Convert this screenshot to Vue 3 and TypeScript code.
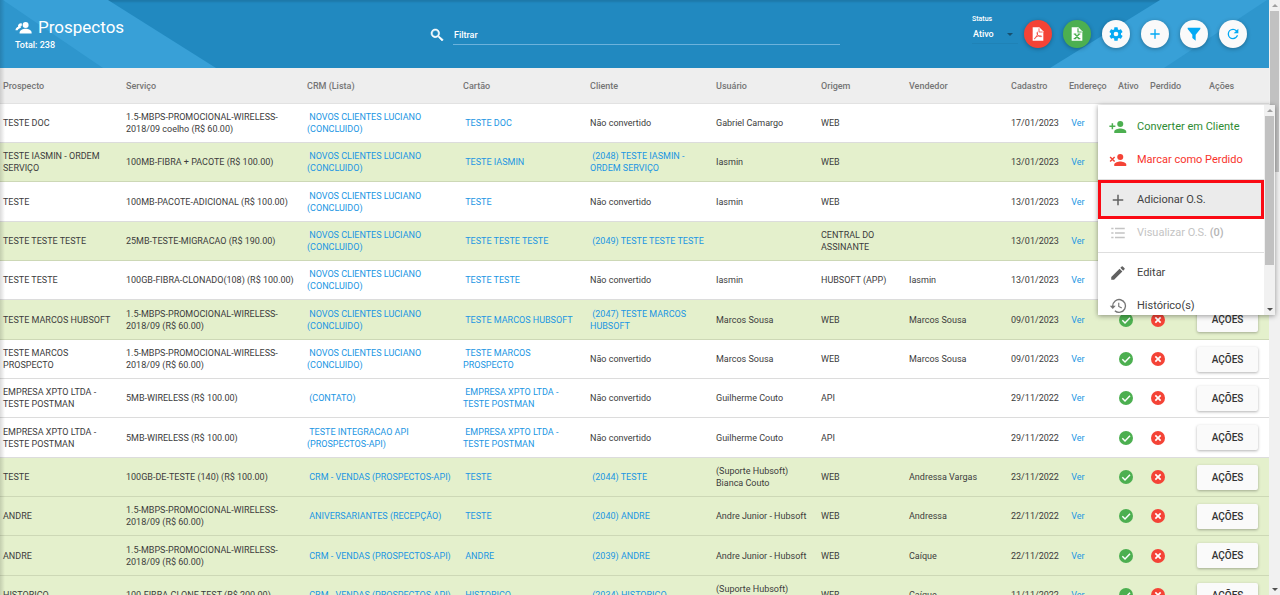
<script setup lang="ts">
import { ref } from 'vue'

interface Row {
  name: string
  service: string
  crm: string
  card: string
  client: string
  user: string
  origin: string
  seller: string
  date: string
}

const promo = '1.5-MBPS-PROMOCIONAL-WIRELESS-2018/09'
const novos = 'NOVOS CLIENTES LUCIANO (CONCLUIDO)'
const vendas = 'CRM - VENDAS (PROSPECTOS-API)'

function row(
  name: string, service: string, crm: string, card: string, client: string,
  user: string, origin: string, seller: string, date: string,
): Row {
  return { name, service, crm, card, client, user, origin, seller, date }
}

const rows: Row[] = [
  row('TESTE DOC', promo + ' coelho (R$ 60.00)', novos, 'TESTE DOC', '', 'Gabriel Camargo', 'WEB', '', '17/01/2023'),
  row('TESTE IASMIN - ORDEM SERVIÇO', '100MB-FIBRA + PACOTE (R$ 100.00)', novos, 'TESTE IASMIN', '(2048) TESTE IASMIN - ORDEM SERVIÇO', 'Iasmin', 'WEB', '', '13/01/2023'),
  row('TESTE', '100MB-PACOTE-ADICIONAL (R$ 100.00)', novos, 'TESTE', '', 'Iasmin', 'WEB', '', '13/01/2023'),
  row('TESTE TESTE TESTE', '25MB-TESTE-MIGRACAO (R$ 190.00)', novos, 'TESTE TESTE TESTE', '(2049) TESTE TESTE TESTE', '', 'CENTRAL DO ASSINANTE', '', '13/01/2023'),
  row('TESTE TESTE', '100GB-FIBRA-CLONADO(108) (R$ 100.00)', novos, 'TESTE TESTE', '', 'Iasmin', 'HUBSOFT (APP)', 'Iasmin', '13/01/2023'),
  row('TESTE MARCOS HUBSOFT', promo + ' (R$ 60.00)', novos, 'TESTE MARCOS HUBSOFT', '(2047) TESTE MARCOS HUBSOFT', 'Marcos Sousa', 'WEB', 'Marcos Sousa', '09/01/2023'),
  row('TESTE MARCOS PROSPECTO', promo + ' (R$ 60.00)', novos, 'TESTE MARCOS PROSPECTO', '', 'Marcos Sousa', 'WEB', 'Marcos Sousa', '09/01/2023'),
  row('EMPRESA XPTO LTDA - TESTE POSTMAN', '5MB-WIRELESS (R$ 100.00)', '(CONTATO)', 'EMPRESA XPTO LTDA - TESTE POSTMAN', '', 'Guilherme Couto', 'API', '', '29/11/2022'),
  row('EMPRESA XPTO LTDA - TESTE POSTMAN', '5MB-WIRELESS (R$ 100.00)', 'TESTE INTEGRACAO API (PROSPECTOS-API)', 'EMPRESA XPTO LTDA - TESTE POSTMAN', '', 'Guilherme Couto', 'API', '', '29/11/2022'),
  row('TESTE', '100GB-DE-TESTE (140) (R$ 100.00)', vendas, 'TESTE', '(2044) TESTE', '(Suporte Hubsoft)\nBianca Couto', 'WEB', 'Andressa Vargas', '23/11/2022'),
  row('ANDRE', promo + ' (R$ 60.00)', 'ANIVERSARIANTES (RECEPÇÃO)', 'TESTE', '(2040) ANDRE', 'Andre Junior - Hubsoft', 'WEB', 'Andressa', '22/11/2022'),
  row('ANDRE', promo + ' (R$ 60.00)', vendas, 'ANDRE', '(2039) ANDRE', 'Andre Junior - Hubsoft', 'WEB', 'Caíque', '22/11/2022'),
  row('HISTORICO', '100-FIBRA-CLONE TEST (R$ 200.00)', vendas, 'HISTORICO', '(2034) HISTORICO', '(Suporte Hubsoft)\nBianca Couto', 'WEB', 'Caíque', '11/11/2022'),
]

const headings = ['Prospecto', 'Serviço', 'CRM (Lista)', 'Cartão', 'Cliente', 'Usuário', 'Origem', 'Vendedor', 'Cadastro', 'Endereço', 'Ativo', 'Perdido', 'Ações']

const search = ref('')
const status = ref('Ativo')
</script>

<template>
  <div class="page">
    <main class="content">
      <header class="topbar">
        <svg class="band band-left" width="216" height="68" viewBox="0 0 216 68" aria-hidden="true">
          <path d="M0 0H108L216 68H0z" fill="#38a0d7" />
          <path d="M0 0H3L103 68H0z" fill="#2e96cd" />
        </svg>
        <svg class="band band-right" width="219" height="68" viewBox="0 0 219 68" aria-hidden="true">
          <path d="M0 68L110 0H219V68z" fill="#38a0d7" />
          <path d="M114 68L217 0H219V68z" fill="#2e96cd" />
        </svg>
        <div class="brand">
          <h1>
            <svg width="17" height="17" viewBox="0 0 24 24" fill="#fff" aria-hidden="true">
              <circle cx="15" cy="8.500" r="4.200" />
              <path d="M6.500 19.500c0-4 5-5.700 8.500-5.700s8.500 1.700 8.500 5.700v1h-17z" />
              <path d="M9.800 6.200A4 4 0 0 0 4.400 11C2.500 11.800.7 13.200.7 15.800h3c1-2 2.500-3 4.800-3.600L7.600 11c1.300-.3 1.900-1.200 2-2.500z" />
            </svg>
            Prospectos
          </h1>
          <p>Total: 238</p>
        </div>
        <div class="search">
          <svg width="16" height="16" viewBox="0 0 24 24" fill="#fff" aria-hidden="true">
            <path d="M15.500 14h-.8l-.3-.3A6.500 6.500 0 1 0 13.700 14.400l.3.300v.8l5.500 5.500 1.900-1.900zM9.500 14a4.500 4.500 0 1 1 0-9 4.500 4.500 0 0 1 0 9z" stroke="#fff" stroke-width=".8" />
          </svg>
          <input v-model="search" type="text" placeholder="Filtrar" aria-label="Filtrar" />
        </div>
        <div class="tools">
          <div class="status">
            <label for="status">Status</label>
            <div class="select-wrap">
              <select id="status" v-model="status">
                <option>Ativo</option>
                <option>Inativo</option>
              </select>
              <span class="caret"></span>
            </div>
          </div>
          <button class="round red" type="button" aria-label="Exportar PDF">
            <svg width="16" height="16" viewBox="0 0 24 24">
              <path d="M4 2h10l6 6v14H4z" fill="#fff" />
              <path d="M13.500 3.500V9H19M7 19c2-1 4.500-6 4.500-9 0-1.500-1.500-1-1 1 .7 3 3.500 5.500 6.500 5 1.500-.5 0-1.500-2-1.300-3 .2-6.500 1.300-8 3.300-.8 1 0 1.500 1 .5" fill="none" stroke="#f44336" stroke-width="1.200" />
            </svg>
          </button>
          <button class="round green" type="button" aria-label="Exportar Excel">
            <svg width="16" height="16" viewBox="0 0 24 24">
              <path d="M4 2h10l6 6v14H4z" fill="#fff" />
              <path d="M13.500 3.500V9H19M8.500 12l7 7M15.500 12l-7 7M7 12h4M13 12h4M7 19h4M13 19h4" fill="none" stroke="#4caf50" stroke-width="1.800" />
            </svg>
          </button>
          <button class="round" type="button" aria-label="Configurações">
            <svg width="16" height="16" viewBox="0 0 24 24">
              <path fill="#03a9f4" d="M12 15.500A3.500 3.500 0 0 1 8.500 12 3.500 3.500 0 0 1 12 8.500a3.500 3.500 0 0 1 3.500 3.500 3.500 3.500 0 0 1-3.500 3.500m7.430-2.530c.04-.32.070-.64.070-.97s-.03-.66-.07-1l2.110-1.630c.19-.15.240-.42.120-.64l-2-3.460c-.12-.22-.39-.31-.61-.22l-2.490 1c-.52-.39-1.060-.73-1.690-.98l-.37-2.650A.506.506 0 0 0 14 2h-4c-.25 0-.46.180-.5.420l-.37 2.650c-.63.250-1.170.590-1.690.980l-2.490-1c-.22-.09-.49 0-.61.220l-2 3.460c-.13.220-.07.490.120.640L4.570 11c-.04.340-.07.670-.07 1s.03.650.070.970l-2.110 1.660c-.19.150-.25.420-.12.640l2 3.460c.120.220.390.300.610.220l2.490-1.010c.520.400 1.060.740 1.690.990l.370 2.650c.04.240.250.420.500.420h4c.250 0 .460-.18.500-.42l.370-2.650c.630-.26 1.170-.59 1.690-.99l2.490 1.010c.220.080.490 0 .610-.22l2-3.460c.120-.22.070-.49-.12-.64z" />
            </svg>
          </button>
          <button class="round" type="button" aria-label="Adicionar">
            <svg width="16" height="16" viewBox="0 0 24 24"><path d="M12 5v14M5 12h14" stroke="#03a9f4" stroke-width="2" /></svg>
          </button>
          <button class="round" type="button" aria-label="Filtros">
            <svg width="16" height="16" viewBox="0 0 24 24"><path d="M2.500 2.500h19v2l-7 8.500v9L9.500 18v-5l-7-8.500z" fill="#03a9f4" /></svg>
          </button>
          <button class="round" type="button" aria-label="Atualizar">
            <svg width="16" height="16" viewBox="0 0 24 24">
              <path d="M17.650 6.350A7.958 7.958 0 0 0 12 4a8 8 0 0 0-8 8 8 8 0 0 0 8 8c3.730 0 6.840-2.550 7.730-6h-2.080A5.990 5.990 0 0 1 12 18a6 6 0 0 1-6-6 6 6 0 0 1 6-6c1.660 0 3.140.690 4.220 1.780L13 11h7V4z" fill="#03a9f4" />
            </svg>
          </button>
        </div>
      </header>

      <table>
        <colgroup>
          <col v-for="(h, i) in headings" :key="h" :class="'c' + i" />
        </colgroup>
        <thead>
          <tr>
            <th v-for="h in headings" :key="h" scope="col">{{ h }}</th>
          </tr>
        </thead>
        <tbody>
          <tr v-for="(r, i) in rows" :key="i" :class="{ converted: r.client }">
            <td>{{ r.name }}</td>
            <td>{{ r.service }}</td>
            <td>&nbsp;<a href="#">{{ r.crm }}</a></td>
            <td>&nbsp;<a href="#">{{ r.card }}</a></td>
            <td v-if="r.client">&nbsp;<a href="#">{{ r.client }}</a></td>
            <td v-else>Não convertido</td>
            <td class="user">{{ r.user }}</td>
            <td>{{ r.origin }}</td>
            <td>{{ r.seller }}</td>
            <td class="nowrap">{{ r.date }}</td>
            <td>&nbsp;<a href="#">Ver</a></td>
            <td class="mark">
              <svg width="16" height="16" viewBox="0 0 24 24" role="img" aria-label="Sim">
                <circle cx="12" cy="12" r="10.500" fill="#4caf50" />
                <path d="M6.500 12.500l4 4 7.500-8" fill="none" stroke="#fff" stroke-width="2.200" />
              </svg>
            </td>
            <td class="mark">
              <svg width="16" height="16" viewBox="0 0 24 24" role="img" aria-label="Não">
                <circle cx="12" cy="12" r="10.500" fill="#f44336" />
                <path d="M8 8l8 8M16 8l-8 8" stroke="#fff" stroke-width="2.500" />
              </svg>
            </td>
            <td class="act"><button type="button">AÇÕES</button></td>
          </tr>
        </tbody>
      </table>
      <div class="edge"></div>
    </main>

    <div class="scroll page-scroll" aria-hidden="true">
      <span class="arrow up"></span>
      <span class="thumb"></span>
      <span class="arrow down"></span>
    </div>

    <div class="menu">
      <div class="items" role="menu">
        <button class="ok" type="button" role="menuitem">
          <svg width="18" height="18" viewBox="0 0 24 24" fill="#4caf50" aria-hidden="true">
            <circle cx="15" cy="8" r="4" />
            <path d="M7 20v-2c0-2.700 5.300-4 8-4s8 1.300 8 4v2zM3.500 7h2v3h3v2h-3v3h-2v-3h-3v-2h3z" />
          </svg>
          Converter em Cliente
        </button>
        <button class="bad" type="button" role="menuitem">
          <svg width="18" height="18" viewBox="0 0 24 24" fill="#f44336" aria-hidden="true">
            <circle cx="15" cy="8" r="4" />
            <path d="M7 20v-2c0-2.700 5.300-4 8-4s8 1.300 8 4v2z" />
            <path d="M1.500 8l6 6M7.500 8l-6 6" stroke="#f44336" stroke-width="2" />
          </svg>
          Marcar como Perdido
        </button>
        <hr />
        <button class="current" type="button" role="menuitem">
          <svg width="18" height="18" viewBox="0 0 24 24" aria-hidden="true"><path d="M12 5v14M5 12h14" stroke="#616161" stroke-width="2" /></svg>
          Adicionar O.S.
        </button>
        <button type="button" role="menuitem" disabled>
          <svg width="18" height="18" viewBox="0 0 24 24" aria-hidden="true">
            <path d="M3 6h3M3 12h3M3 18h3M8 6h13M8 12h13M8 18h13" stroke="#c4c4c4" stroke-width="2" />
          </svg>
          <span>Visualizar O.S. <b>(0)</b></span>
        </button>
        <hr />
        <button type="button" role="menuitem">
          <svg width="18" height="18" viewBox="0 0 24 24" fill="#616161" aria-hidden="true">
            <path d="M3 17.250V21h3.750L17.810 9.940l-3.750-3.750zM20.710 7.040a1 1 0 0 0 0-1.410l-2.340-2.340a1 1 0 0 0-1.410 0l-1.830 1.830 3.750 3.750z" />
          </svg>
          Editar
        </button>
        <button type="button" role="menuitem">
          <svg width="18" height="18" viewBox="0 0 24 24" aria-hidden="true">
            <path d="M5 12a8.500 8.500 0 1 1 2.800 6.200" fill="none" stroke="#757575" stroke-width="1.800" />
            <path d="M1 11.500h8l-4 4.500z" fill="#757575" />
            <path d="M13 7.500v5l4 2.300" fill="none" stroke="#757575" stroke-width="1.500" />
          </svg>
          Histórico(s)
        </button>
      </div>
      <div class="scroll" aria-hidden="true">
        <span class="arrow up"></span>
        <span class="thumb"></span>
        <span class="arrow down"></span>
      </div>
    </div>
  </div>
</template>

<style>
html, body { overflow: hidden; }
</style>

<style scoped>
.page, .page * { box-sizing: border-box; }
.page {
  position: relative;
  display: grid;
  grid-template-columns: minmax(0, 1fr) 11px;
  height: 100vh;
  overflow: hidden;
  background: #fff;
  color: #3c3c3c;
  font-family: Roboto, "Liberation Sans", sans-serif;
  font-size: 9px;
  line-height: 12px;
}
button, input, select { font-family: inherit; }
.content { position: relative; overflow: hidden; }

.topbar {
  position: relative;
  display: grid;
  grid-template-columns: 429px minmax(0, 1fr) 429px;
  grid-template-rows: 68px;
  background: #2189c0;
  color: #fff;
  box-shadow: inset 0 2px 2px rgba(0, 0, 0, .12);
}
.band { position: absolute; top: 0; }
.band-left { left: 0; }
.band-right { right: 0; }
.brand { position: relative; padding: 16px 0 0 15px; }
h1 {
  display: flex;
  align-items: center;
  gap: 6px;
  margin: 0;
  font-size: 17px;
  line-height: 22px;
  font-weight: 400;
}
.brand p { margin: 1px 0 0; font-weight: 500; }
.search { display: flex; align-items: center; gap: 8px; padding-top: 2px; }
.search input {
  flex: 1;
  min-width: 0;
  height: 19px;
  padding: 0 1px;
  border: 0;
  border-bottom: 1px solid #6cb2dc;
  background: none;
  color: #fff;
  font-size: 9px;
  font-weight: 500;
  outline: 0;
}
.search input::placeholder { color: #fff; opacity: 1; }
.tools {
  position: relative;
  display: flex;
  align-items: center;
  justify-content: flex-end;
  gap: 11px;
  padding-right: 22px;
}
.status { align-self: flex-start; width: 46px; margin-right: -5px; padding-top: 13px; }
.status label { display: block; font-size: 7px; font-weight: 500; }
.select-wrap { position: relative; border-bottom: 1px solid rgba(0, 0, 0, .05); }
.status select {
  display: block;
  width: 100%;
  height: 18px;
  padding: 0 0 0 1px;
  border: 0;
  background: none;
  color: #fff;
  font-size: 9px;
  font-weight: 500;
  appearance: none;
}
.status option { color: #333; }
.caret {
  position: absolute;
  right: 5px;
  top: 8px;
  border: 3px solid transparent;
  border-top-color: #17506f;
  pointer-events: none;
}
.round {
  display: grid;
  place-items: center;
  width: 28px;
  height: 28px;
  padding: 0;
  border: 0;
  border-radius: 50%;
  background: #fafafa;
  box-shadow: 0 1px 4px rgba(0, 0, 0, .3);
}
.red { background: #f44336; }
.green { background: #4caf50; }

table { width: 100%; table-layout: fixed; border-collapse: separate; border-spacing: 0; }
.c0 { width: 123px; }
.c1 { width: 181px; }
.c2 { width: 156px; }
.c3 { width: 127px; }
.c4 { width: 126px; }
.c5 { width: 105px; }
.c6 { width: 88px; }
.c7 { width: 102px; }
.c8 { width: 58px; }
.c9 { width: 49px; }
.c10 { width: 32px; }
.c11 { width: 40px; }
.c12 { width: 82px; }
th {
  height: 36px;
  padding: 0 0 0 3px;
  border-bottom: 1px solid #e2e2e2;
  background: #eee;
  color: #757575;
  font-weight: 500;
  text-align: left;
  white-space: nowrap;
}
th:last-child { padding-left: 22px; }
td { height: 39px; padding: 0 9px 0 3px; border-bottom: 1px solid #dcdcdc; }
tr:nth-child(3n) td { height: 40px; }
.converted td { background: #e4f0cc; border-bottom-color: #cdd8b6; }
.user { white-space: pre-line; }
.nowrap { white-space: nowrap; padding-right: 0; }
td a { color: #2196e3; text-decoration: none; }
.mark { padding-right: 0; }
.mark svg { display: block; }
.act { padding: 0 11px 0 10px; }
.act button {
  display: block;
  width: 100%;
  height: 25px;
  padding: 0;
  border: 0;
  border-radius: 2px;
  background: #fafafa;
  color: #333;
  font-size: 10px;
  font-weight: 500;
  box-shadow: 0 1px 3px rgba(0, 0, 0, .3);
}
.edge {
  position: absolute;
  inset: 0 auto 0 0;
  width: 5px;
  background: linear-gradient(90deg, rgba(0, 0, 0, .14), transparent);
  pointer-events: none;
}

.scroll {
  display: flex;
  flex-direction: column;
  align-items: center;
  width: 11px;
  background: #f1f1f1;
}
.arrow { display: grid; place-items: center; height: 11px; }
.arrow::before { content: ""; border: 3px solid transparent; }
.up::before { border-top: 0; border-bottom-color: #a0a0a0; }
.down::before { border-bottom: 0; border-top-color: #505050; }
.down { margin-top: auto; }
.thumb { width: 9px; height: 71%; background: #c1c1c1; }
.page-scroll .thumb { height: 27%; }

.menu {
  position: absolute;
  top: 105px;
  right: 5px;
  display: grid;
  grid-template-columns: minmax(0, 1fr) 11px;
  width: 177px;
  height: 210px;
  background: #fff;
  box-shadow: 0 1px 5px rgba(0, 0, 0, .4);
}
.items { height: 210px; padding-top: 5px; overflow: hidden; }
.items button {
  display: flex;
  align-items: center;
  gap: 10px;
  width: 100%;
  height: 33px;
  padding: 0 11px;
  border: 0;
  background: none;
  color: #424242;
  font-size: 11px;
  text-align: left;
}
.items .ok { color: #2e8b33; }
.items .bad { color: #f8332c; }
.items button:disabled { color: #c4c4c4; }
.items b { font-weight: 500; color: #b5b5b5; }
.items .current {
  position: relative;
  height: 39px;
  margin: -3px 0;
  padding: 0 8px;
  border: 3px solid #fa0a14;
  background: #ebebeb;
}
hr { height: 1px; margin: 3px 0; border: 0; background: #dedede; }
</style>
